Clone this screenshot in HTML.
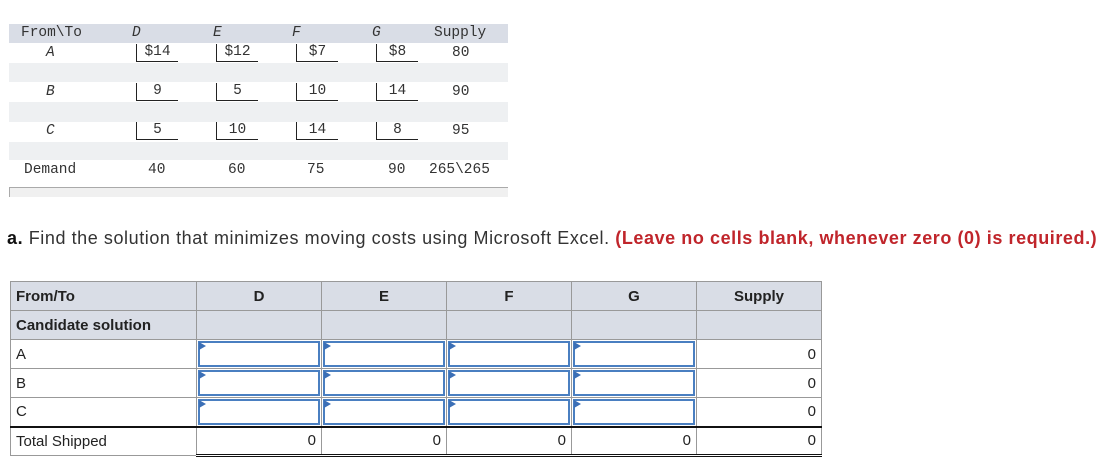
<!DOCTYPE html>
<html><head><style>
*{margin:0;padding:0;box-sizing:border-box}
body{width:1116px;height:465px;background:#fff;position:relative;overflow:hidden;font-family:"Liberation Sans",sans-serif;color:#222}
.m{font-family:"Liberation Mono",monospace;font-size:14.5px;color:#333;position:absolute;line-height:17px}
.band{position:absolute;left:9px;width:499px;background:#eef0f2}
.br{position:absolute;width:42px;height:18px;border-left:1px solid #222;border-bottom:1px solid #222;font-family:"Liberation Mono",monospace;font-size:14.5px;color:#333;text-align:center;line-height:16px}
.it{font-style:italic}
table{position:absolute;left:10px;top:281px;border-collapse:collapse;font-size:15px}
td{border:1px solid #999;height:29px;padding:0 5px;width:125px}
td:first-child{width:186px}
.h td{background:#d9dde6;font-weight:bold}
.in{position:relative}
.in div{position:absolute;left:1px;top:1px;right:1px;bottom:1px;border:2px solid #4a7fc1}
.in div:before{content:"";position:absolute;left:-1px;top:-1px;border-left:7px solid #3b6fb6;border-top:4px solid transparent;border-bottom:4px solid transparent}
.r{text-align:right}
</style></head><body>
<div class="band" style="top:24px;height:19px;background:#d9dde6"></div>
<div class="band" style="top:63px;height:19px"></div>
<div class="band" style="top:102px;height:20px"></div>
<div class="band" style="top:142px;height:18px"></div>
<div style="position:absolute;left:9px;top:187px;width:499px;height:10px;background:#f0f0f0;border-top:1px solid #aaa;border-left:1px solid #aaa"></div>
<div class="m" style="left:21px;top:25px">From\To</div>
<div class="m it" style="left:132px;top:25px">D</div>
<div class="m it" style="left:213px;top:25px">E</div>
<div class="m it" style="left:292px;top:25px">F</div>
<div class="m it" style="left:372px;top:25px">G</div>
<div class="m" style="left:434px;top:25px">Supply</div>
<div class="m it" style="left:46px;top:45px">A</div>
<div class="m it" style="left:46px;top:84px">B</div>
<div class="m it" style="left:46px;top:123px">C</div>
<div class="br" style="left:136px;top:44px">$14</div>
<div class="br" style="left:216px;top:44px">$12</div>
<div class="br" style="left:296px;top:44px">$7</div>
<div class="br" style="left:376px;top:44px">$8</div>
<div class="m" style="left:452px;top:45px">80</div>
<div class="br" style="left:136px;top:83px">9</div>
<div class="br" style="left:216px;top:83px">5</div>
<div class="br" style="left:296px;top:83px">10</div>
<div class="br" style="left:376px;top:83px">14</div>
<div class="m" style="left:452px;top:84px">90</div>
<div class="br" style="left:136px;top:122px">5</div>
<div class="br" style="left:216px;top:122px">10</div>
<div class="br" style="left:296px;top:122px">14</div>
<div class="br" style="left:376px;top:122px">8</div>
<div class="m" style="left:452px;top:123px">95</div>
<div class="m" style="left:24px;top:162px">Demand</div>
<div class="m" style="left:148px;top:162px">40</div>
<div class="m" style="left:228px;top:162px">60</div>
<div class="m" style="left:307px;top:162px">75</div>
<div class="m" style="left:388px;top:162px">90</div>
<div class="m" style="left:429px;top:162px">265\265</div>
<div style="position:absolute;left:7px;top:228px;font-size:18px;letter-spacing:0.57px;white-space:nowrap;color:#333"><b style="color:#111">a.</b> Find the solution that minimizes moving costs using Microsoft Excel. <b style="color:#c0252b">(Leave no cells blank, whenever zero (0) is required.)</b></div>
<table>
<tr class="h"><td>From/To</td><td style="text-align:center">D</td><td style="text-align:center">E</td><td style="text-align:center">F</td><td style="text-align:center">G</td><td style="text-align:center">Supply</td></tr>
<tr class="h"><td>Candidate solution</td><td></td><td></td><td></td><td></td><td></td></tr>
<tr><td>A</td><td class="in"><div></div></td><td class="in"><div></div></td><td class="in"><div></div></td><td class="in"><div></div></td><td class="r">0</td></tr>
<tr><td>B</td><td class="in"><div></div></td><td class="in"><div></div></td><td class="in"><div></div></td><td class="in"><div></div></td><td class="r">0</td></tr>
<tr><td>C</td><td class="in"><div></div></td><td class="in"><div></div></td><td class="in"><div></div></td><td class="in"><div></div></td><td class="r">0</td></tr>
<tr style="border-top:2px solid #111"><td>Total Shipped</td><td class="r" style="border-bottom:3px double #111">0</td><td class="r" style="border-bottom:3px double #111">0</td><td class="r" style="border-bottom:3px double #111">0</td><td class="r" style="border-bottom:3px double #111">0</td><td class="r" style="border-bottom:3px double #111">0</td></tr>
</table>
</body></html>
